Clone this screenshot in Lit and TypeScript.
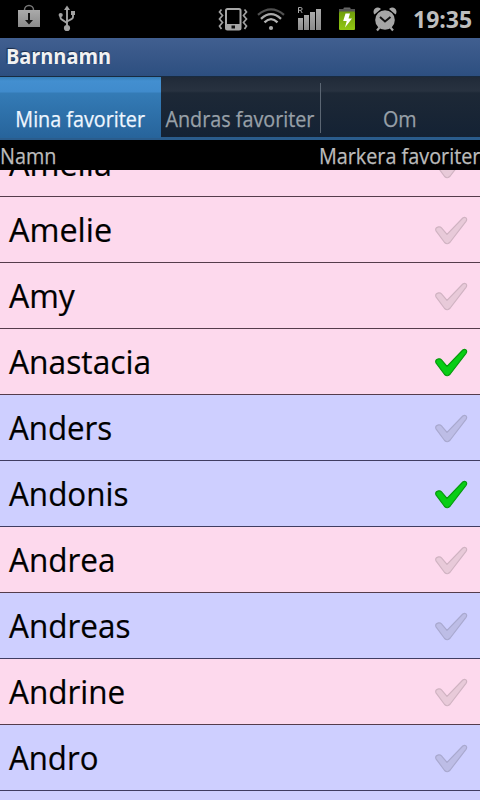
import { LitElement, html, css } from "lit";
import { customElement, property } from "lit/decorators.js";
import { classMap } from "lit/directives/class-map.js";
import { styleMap } from "lit/directives/style-map.js";

type Entry = { name: string; kind: "girl" | "boy"; stretch: number; marked?: boolean };

const names: Entry[] = [
  { name: "Amelia", kind: "girl", stretch: 0.98 },
  { name: "Amelie", kind: "girl", stretch: 0.98 },
  { name: "Amy", kind: "girl", stretch: 0.97 },
  { name: "Anastacia", kind: "girl", stretch: 0.962, marked: true },
  { name: "Anders", kind: "boy", stretch: 0.947 },
  { name: "Andonis", kind: "boy", stretch: 0.952, marked: true },
  { name: "Andrea", kind: "girl", stretch: 0.953 },
  { name: "Andreas", kind: "boy", stretch: 0.953 },
  { name: "Andrine", kind: "girl", stretch: 0.953 },
  { name: "Andro", kind: "boy", stretch: 0.945 },
  { name: "", kind: "boy", stretch: 1 },
];

@customElement("status-bar")
class StatusBar extends LitElement {
  static styles = css`
    :host { display: block; height: 38px; background: #000; }
    .bar { display: flex; height: 38px; width: 480px; }
    .icons { flex: none; display: block; }
    .clock {
      flex: 1; font: bold 23px/38px "Open Sans", "Noto Sans", sans-serif;
      color: #bebebe; white-space: nowrap;
    }
  `;
  render() {
    return html`<div class="bar">
      <svg class="icons" width="413" height="38" viewBox="0 0 413 38">
        <defs>
          <linearGradient id="grey" x2="0" y2="1"><stop stop-color="#aaa"/><stop offset="1" stop-color="#8b8b8b"/></linearGradient>
          <linearGradient id="green" x2="0" y2="1"><stop stop-color="#6f9d0c"/><stop offset="1" stop-color="#91c812"/></linearGradient>
        </defs>
        <path d="M24.500 11V10a4.500 4.500 0 0 1 9 0v1" fill="none" stroke="#777" stroke-width="1.500"/>
        <rect x="18" y="10" width="22" height="17" fill="url(#grey)"/>
        <path d="M28 13h2v7h3l-4 4.500-4-4.500h3z" fill="#111"/>
        <g fill="none" stroke="#a2a2a2" stroke-width="1.900">
          <path d="M67 9v18M60.500 15v2.500q0 1.500 1.500 2.200L67 23M73 14v3q0 1.200-1.200 1.800L67 21.500"/>
        </g>
        <g fill="#a2a2a2"><path d="M67 5.500l3 4.500h-6z"/><circle cx="60.700" cy="15" r="2.100"/><rect x="71" y="11" width="4" height="4"/><circle cx="67" cy="28" r="3.100"/></g>
        <rect x="226" y="9" width="14.500" height="20.500" rx="1.500" fill="none" stroke="#a8a8a8" stroke-width="2"/>
        <rect x="226" y="24" width="14.500" height="6" fill="#a8a8a8"/><rect x="231.500" y="25.500" width="3.500" height="3" fill="#111"/>
        <path d="M221.500 9.500l-2 2.500 3 3.500-3 3.500 3 3.500-3 3.500 2 3M244.500 9.500l2 2.500-3 3.500 3 3.500-3 3.500 3 3.500-2 3" fill="none" stroke="#a0a0a0" stroke-width="1.700"/>
        <g fill="none" stroke-width="2.300">
          <path d="M258 14.800Q271 4 284 14.800" stroke="#505050"/>
          <path d="M261 18.800Q271 9.500 281 18.800" stroke="#aaa"/>
          <path d="M264.500 22.300Q271 16 277.500 22.300" stroke="#b2b2b2"/>
        </g>
        <circle cx="271" cy="28" r="2.100" fill="#aaa"/>
        <path d="M298.500 13V7.500h2.300q1.300 0 1.300 1.400t-1.300 1.400H298.500M300.500 10.300l1.700 2.700" fill="none" stroke="#aaa"/>
        <g fill="url(#grey)"><rect x="298" y="18" width="5" height="12"/><rect x="304" y="15" width="5" height="15"/><rect x="310" y="12" width="5" height="18"/><rect x="316" y="9" width="5" height="21"/></g>
        <rect x="343.500" y="7.500" width="7" height="3" rx="1" fill="#666"/>
        <rect x="339" y="9" width="16" height="3" fill="#555"/>
        <rect x="339" y="11.500" width="16" height="18.500" rx="1" fill="url(#green)"/>
        <path d="M345.500 13.500h4.500l-1.500 5h3.500l-7 9 1.700-6.500h-3.500z" fill="#fff"/>
        <circle cx="385" cy="20" r="9.800" fill="#a6a6a6"/>
        <path d="M374.500 14.500a4 4 0 0 1 6.500-5.500zM395.500 14.500a4 4 0 0 0-6.500-5.500z" fill="#a6a6a6"/>
        <path d="M379.500 27.500l-2.500 3M390.500 27.500l2.500 3" stroke="#a6a6a6" stroke-width="2.200"/>
        <path d="M380 17l5 4.500 5.500-4.500" fill="none" stroke="#111" stroke-width="2"/>
      </svg>
      <div class="clock">19:35</div>
    </div>`;
  }
}

@customElement("name-row")
class NameRow extends LitElement {
  @property({ attribute: false }) entry!: Entry;
  static styles = css`
    :host { display: block; }
    .row {
      box-sizing: border-box; height: 66px; display: flex; align-items: center;
      justify-content: space-between; padding: 1px 12px 0 9px;
      font: 33px/64px "Open Sans", "Noto Sans", sans-serif; color: #000;
    }
    .girl { background: #fdd9ed; border-bottom: 1px solid #553c4c; --mark: #e8cad9; --edge: #d0b3c2; }
    .boy { background: #cecfff; border-bottom: 1px solid #403d62; --mark: #bdbde6; --edge: #a9a9cf; }
    .marked { --mark: #08ce15; --edge: #079a0d; }
    .name { white-space: nowrap; transform-origin: left; -webkit-text-stroke: .2px #000; }
    .check { display: block; }
  `;
  render() {
    const e = this.entry;
    return html`<div class=${classMap({ row: true, [e.kind]: true, marked: !!e.marked })}>
      <span class="name" style=${styleMap({ transform: `scaleX(${e.stretch})` })}>${e.name}</span>
      <svg class="check" width="33" height="30" viewBox="0 0 33 30">
        <path d="M1 15.800Q.100 13.800 1.800 12.600L3.500 11.900Q5.200 11.400 6.500 12.900L12 19.300 27.800 3Q29.500 1.600 31 2.900 32.300 4.400 31 6.300L15.200 27Q12.400 30.200 9.600 27.500Z"
          fill="var(--mark)" stroke="var(--edge)" stroke-width="1.200" stroke-linejoin="round"/>
      </svg>
    </div>`;
  }
}

@customElement("app-root")
class AppRoot extends LitElement {
  static styles = css`
    :host {
      display: flex; flex-direction: column; width: 480px; height: 800px; overflow: hidden;
      background: #000; font-family: "Open Sans", "Noto Sans", sans-serif;
    }
    .title {
      flex: none; box-sizing: border-box; height: 38px; padding-left: 6px;
      background: linear-gradient(#415f90, #2d4f80);
      font-weight: bold; font-size: 21px; line-height: 37px; color: #f2f2f2;
      text-shadow: -1px -1px 1px #1b2d48;
    }
    .fit { display: inline-block; white-space: nowrap; }
    .title .fit { transform: scaleX(.945); transform-origin: left; }
    .tabs {
      flex: none; box-sizing: border-box; height: 64px; display: grid;
      grid-template-columns: 161px 159px 160px; border-top: 1px solid #182b40;
      border-bottom: 3px solid #2a5c8c; background: #192535;
    }
    .tab {
      display: flex; justify-content: center; font-size: 22px; line-height: 82px; height: 60px;
      color: #98a0a8; background: linear-gradient(#202a38, #283240 14px, #1d2836 16px, #142234);
    }
    .tab .fit { transform: translateX(-1px) scaleX(.898); -webkit-text-stroke: .25px currentColor; }
    .tab.active {
      height: 61px; color: #eef6ff;
      background: linear-gradient(#3780b9, #438fd0 4px, #408bcc 15px, #347bb6 16px, #27649b);
    }
    .tab.active .fit { transform: scaleX(.898); }
    .tab.last { background: linear-gradient(#5b6673, #5b6673) 0 6px / 1px 50px no-repeat,
      linear-gradient(#202a38, #283240 14px, #1d2836 16px, #142234); }
    .tab.last .fit { transform: scaleX(.898); }
    .head {
      flex: none; height: 30px; display: flex; justify-content: space-between;
      font-size: 22px; line-height: 30px; color: #bcbcbc;
    }
    .head .fit { transform: scaleX(.9); transform-origin: left; -webkit-text-stroke: .25px currentColor; }
    .head .right { transform-origin: right; }
    .list { flex: 1; min-height: 0; overflow: hidden; }
    .rows { margin-top: -39px; }
  `;
  render() {
    return html`
      <status-bar></status-bar>
      <div class="title"><span class="fit">Barnnamn</span></div>
      <div class="tabs">
        <div class="tab active"><span class="fit">Mina favoriter</span></div>
        <div class="tab"><span class="fit">Andras favoriter</span></div>
        <div class="tab last"><span class="fit">Om</span></div>
      </div>
      <div class="head"><span class="fit">Namn</span><span class="fit right">Markera favoriter</span></div>
      <div class="list"><div class="rows">
        ${names.map((e) => html`<name-row .entry=${e}></name-row>`)}
      </div></div>`;
  }
}
